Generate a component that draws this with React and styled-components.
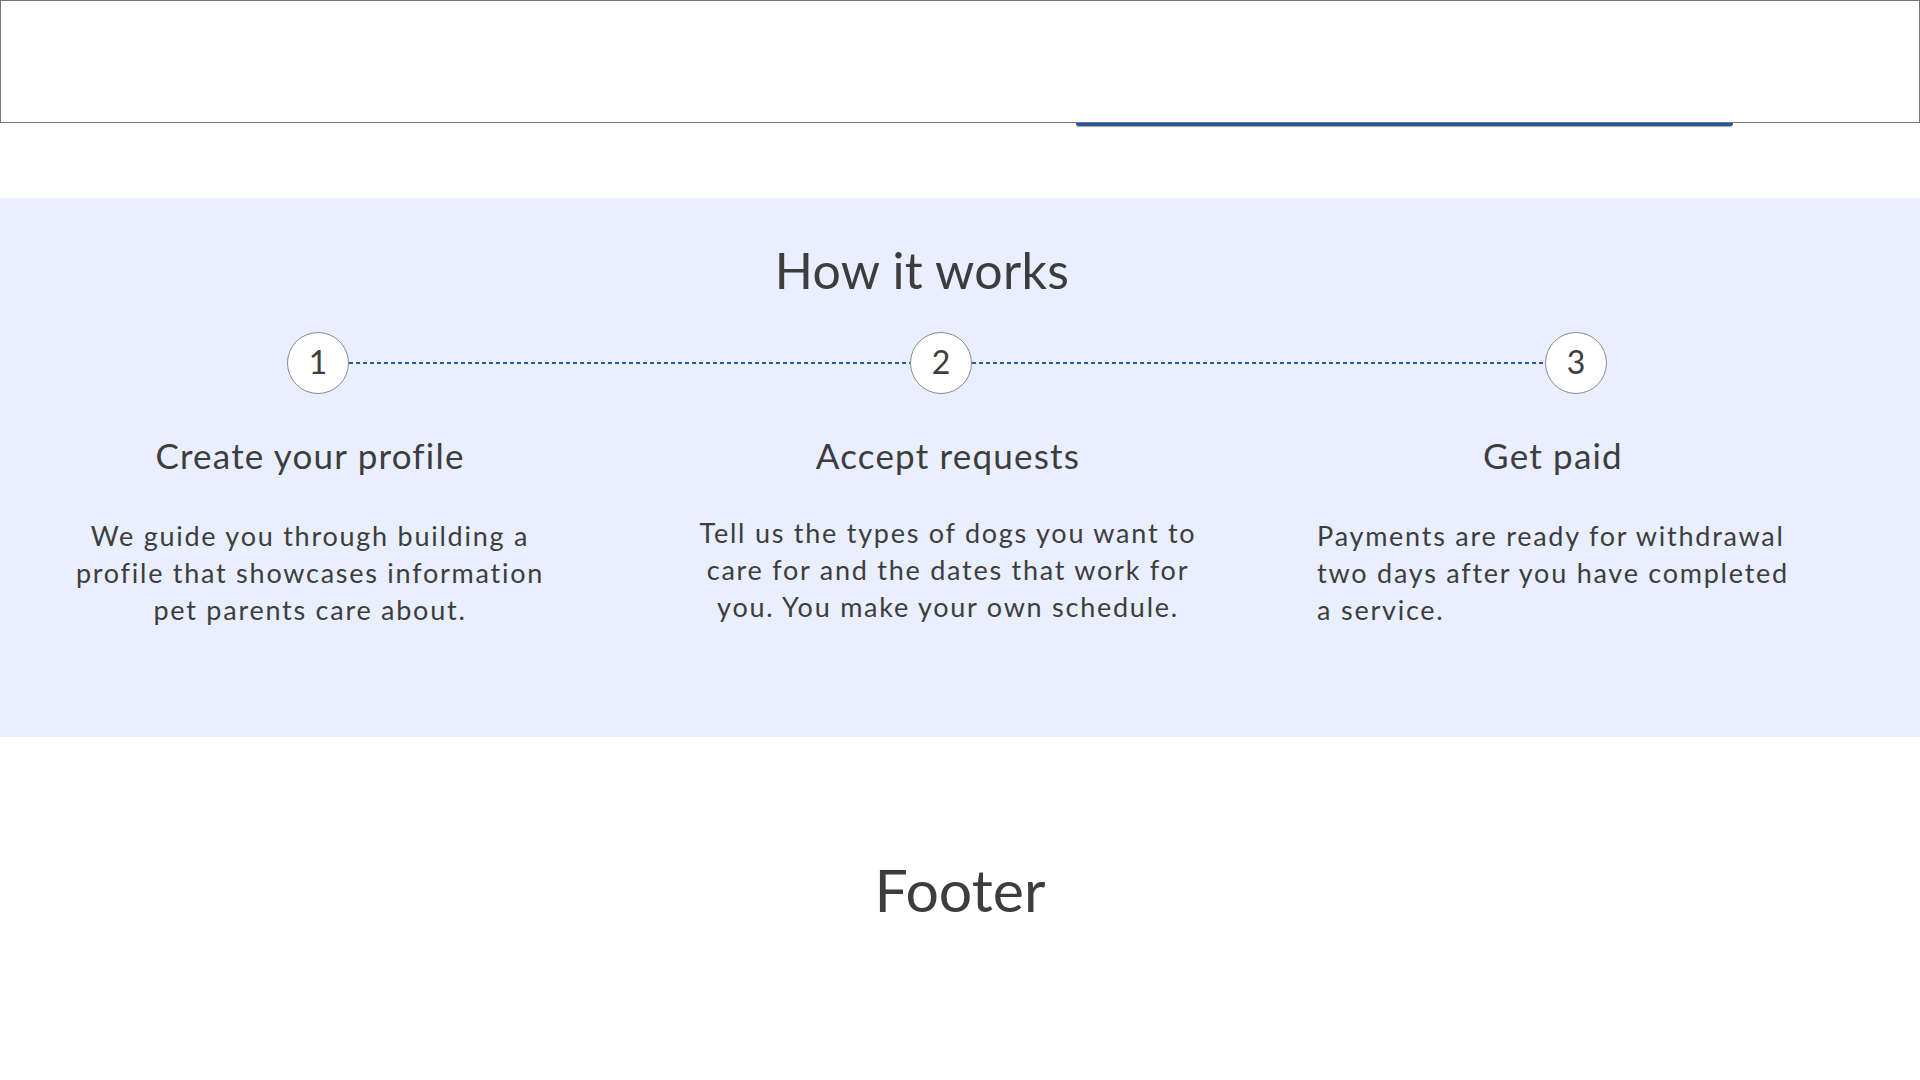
import React from "react";
import styled, { createGlobalStyle } from "styled-components";

const Global = createGlobalStyle`
  html, body { margin: 0; padding: 0; background: #ffffff; }
  body { font-family: Lato, "Open Sans", sans-serif; color: #3d3d3d; }
  * { box-sizing: border-box; }
`;

const Page = styled.div`
  width: 1920px;
  display: flex;
  flex-direction: column;
`;

const HeaderBox = styled.header`
  height: 123px;
  border: 1px solid #767676;
  background: #ffffff;
`;

const ButtonEdge = styled.div`
  margin-left: 1076px;
  width: 657px;
  height: 3px;
  background: #1f55a0;
  border-radius: 0 0 4px 4px;
  box-shadow: 0 1px 1px rgba(0, 0, 0, 0.35);
`;

const HowSection = styled.section`
  margin-top: 72px;
  height: 539px;
  background: #e9effe;
  padding-top: 42px;
  display: flex;
  flex-direction: column;
`;

const Title = styled.h2`
  margin: 0;
  padding-right: 76px;
  text-align: center;
  font-size: 50px;
  line-height: 60px;
  font-weight: 400;
  color: #3d3d3d;
  letter-spacing: 0.3px;
`;

const StepsRow = styled.div`
  margin-top: 32px;
  margin-left: 287px;
  display: flex;
  align-items: center;
`;

const Circle = styled.div`
  width: 62px;
  height: 62px;
  flex: none;
  border-radius: 50%;
  border: 1px solid #8a8a8a;
  background: #ffffff;
  display: flex;
  align-items: center;
  justify-content: center;
  font-size: 32px;
  color: #3d3d3d;
  padding-bottom: 3px;
`;

const Dots = styled.div`
  flex: none;
  width: ${(p) => p.$w}px;
  height: 2px;
  background: repeating-linear-gradient(
    to right,
    #2459a3 0,
    #2459a3 4px,
    transparent 4px,
    transparent 7px
  );
`;

const Columns = styled.div`
  margin-top: 40px;
  display: grid;
  grid-template-columns: 620px 656px 554px;
`;

const Column = styled.div`
  display: flex;
  flex-direction: column;
  align-items: center;
`;

const StepTitle = styled.h3`
  margin: 0;
  font-size: 35px;
  line-height: 42px;
  font-weight: 400;
  color: #3d3d3d;
  letter-spacing: 1.2px;
`;

const StepText = styled.p`
  margin: ${(p) => (p.$lift ? 38 : 41)}px 0 0;
  font-size: 27px;
  line-height: 37px;
  font-weight: 400;
  color: #3d3d3d;
  letter-spacing: 1.75px;
  white-space: nowrap;
  text-align: ${(p) => p.$align || "center"};
`;

const FooterSection = styled.footer`
  padding-top: 117px;
  display: flex;
  justify-content: center;
`;

const FooterTitle = styled.h2`
  margin: 0;
  font-size: 59px;
  line-height: 71px;
  font-weight: 400;
  color: #3d3d3d;
`;

export default function App() {
  return (
    <Page>
      <Global />
      <HeaderBox />
      <ButtonEdge />
      <HowSection>
        <Title>How it works</Title>
        <StepsRow>
          <Circle>1</Circle>
          <Dots $w={561} />
          <Circle>2</Circle>
          <Dots $w={573} />
          <Circle>3</Circle>
        </StepsRow>
        <Columns>
          <Column>
            <StepTitle>Create your profile</StepTitle>
            <StepText>
              We guide you through building a<br />
              profile that showcases information<br />
              pet parents care about.
            </StepText>
          </Column>
          <Column>
            <StepTitle>Accept requests</StepTitle>
            <StepText $lift>
              Tell us the types of dogs you want to<br />
              care for and the dates that work for<br />
              you. You make your own schedule.
            </StepText>
          </Column>
          <Column>
            <StepTitle>Get paid</StepTitle>
            <StepText $align="left">
              Payments are ready for withdrawal<br />
              two days after you have completed<br />
              a service.
            </StepText>
          </Column>
        </Columns>
      </HowSection>
      <FooterSection>
        <FooterTitle>Footer</FooterTitle>
      </FooterSection>
    </Page>
  );
}
